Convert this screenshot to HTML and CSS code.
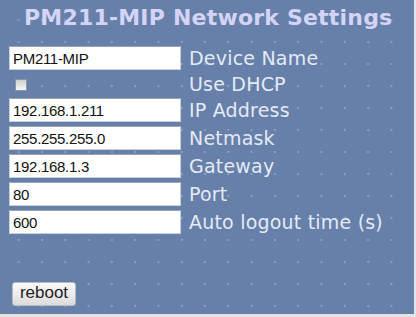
FILE: index.html
```html
<!DOCTYPE html>
<html lang="en">
<head>
    <meta charset="UTF-8">
    <title>PM211-MIP Network Settings</title>
    <link rel="stylesheet" href="styles.css">
</head>
<body>

    <div class="panel">
        <h1>PM211-MIP Network Settings</h1>
        <form class="settings">
            <input type="text" value="PM211-MIP">
            <label>Device Name</label>

            <div class="check"><input type="checkbox"></div>
            <label class="short">Use DHCP</label>

            <input type="text" value="192.168.1.211">
            <label>IP Address</label>

            <input type="text" value="255.255.255.0">
            <label>Netmask</label>

            <input type="text" value="192.168.1.3">
            <label>Gateway</label>

            <input type="text" value="80">
            <label>Port</label>

            <input type="text" value="600">
            <label>Auto logout time (s)</label>
        </form>
        <button class="reboot">reboot</button>
    </div>

</body>
</html>
```

FILE: styles.css
```css
body {
    margin: 0;
    width: 416px;
    height: 317px;
    background: #e4e4e4;
}
.panel {
    width: 414px;
    height: 314px;
    box-sizing: border-box;
    padding: 0 0 0 9px;
    background-color: #6680a9;
    background-image: radial-gradient(circle, #8a9fc2 0.9px, transparent 1.3px);
    background-size: 23.3px 22px;
    background-position: 7px 9px;
    font-family: "DejaVu Sans", Verdana, sans-serif;
}
h1 {
    margin: 0;
    padding: 5px 0 0 15px;
    height: 40px;
    box-sizing: border-box;
    font-size: 22px;
    font-weight: bold;
    color: #d4d4f6;
    letter-spacing: 0.2px;
}
.settings {
    display: grid;
    grid-template-columns: 172px auto;
    column-gap: 8px;
    row-gap: 4px;
    margin-top: 6px;
}
.settings input[type="text"] {
    width: 172px;
    height: 24px;
    box-sizing: border-box;
    margin: 0;
    padding: 1px 3px 0;
    border: 1px solid #c8d0dc;
    border-top-color: #9aa4b4;
    background: #fff;
    font-family: "Liberation Sans", Arial, sans-serif;
    font-size: 15px;
    letter-spacing: -0.3px;
    color: #111;
}
.check {
    height: 20px;
    display: flex;
    align-items: center;
}
.check input {
    width: 12px;
    height: 12px;
    margin: 2px 0 0 6px;
    appearance: none;
    border: 1px solid #8e96a2;
    background: linear-gradient(#cfcfcf, #f6f6f6);
}
label {
    font-size: 19px;
    line-height: 24px;
    color: #e4eaf6;
    white-space: nowrap;
    letter-spacing: 0.2px;
}
label.short {
    line-height: 20px;
}
.reboot {
    margin: 48px 0 0 3px;
    width: 64px;
    height: 24px;
    padding: 0 0 2px;
    border: 1px solid #b8bcc2;
    border-radius: 3px;
    background: linear-gradient(#fbfbfb, #dcdcdc);
    font-family: "Liberation Sans", Arial, sans-serif;
    font-size: 17px;
    color: #222;
}
```
